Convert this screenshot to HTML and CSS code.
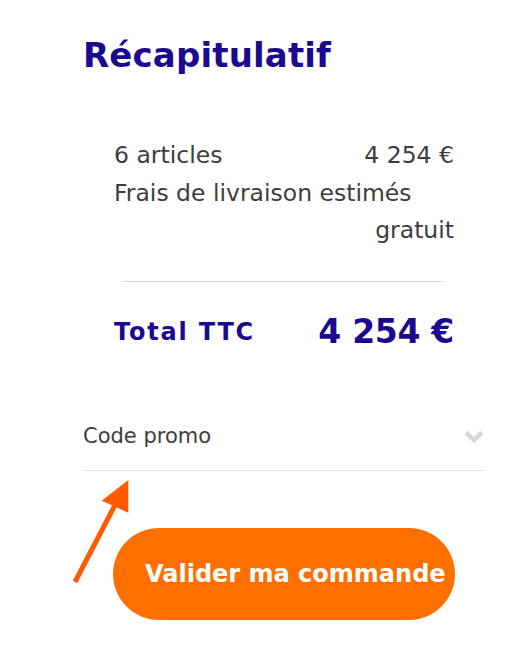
FILE: index.html
```html
<!DOCTYPE html>
<html lang="fr">
<head>
<meta charset="utf-8">
<link rel="stylesheet" href="styles.css">
</head>
<body>
<div class="summary">
  <h1 class="title">Récapitulatif</h1>
  <div class="details">
    <div class="row"><span>6 articles</span><span>4 254 €</span></div>
    <div class="row row-stack"><span>Frais de livraison estimés</span><span class="right">gratuit</span></div>
    <hr class="divider">
    <div class="row total"><span class="total-label">Total TTC</span><span class="total-value">4 254 €</span></div>
  </div>
  <div class="promo">
    <span>Code promo</span>
    <svg class="chevron" width="20" height="13" viewBox="0 0 20 13"><path d="M2 2.5 L10 10 L18 2.5" fill="none" stroke="#d6d6d6" stroke-width="4.5"/></svg>
  </div>
  <div class="actions">
    <svg class="arrow" width="70" height="115" viewBox="0 0 70 115"><line x1="7" y1="107" x2="47" y2="30" stroke="#ff5a00" stroke-width="5"/><polygon points="60.3,5 60.3,37.7 33.7,25.7" fill="#ff5a00"/></svg>
    <button class="btn">Valider ma commande</button>
  </div>
</div>
</body>
</html>
```

FILE: styles.css
```css
* { box-sizing: border-box; }
body {
  margin: 0;
  background: #fff;
  font-family: "DejaVu Sans", "Open Sans", sans-serif;
  color: #3d3d3d;
}
.summary {
  margin-left: 83px;
  width: 402px;
  padding-top: 30px;
}
.title {
  margin: 0;
  font-size: 34px;
  line-height: 50px;
  font-weight: 700;
  color: #1b0a8f;
  letter-spacing: 0.15px;
}
.details {
  margin-top: 57px;
  padding-left: 31px;
  width: 371px;
}
.row {
  display: flex;
  justify-content: space-between;
  font-size: 23.5px;
  line-height: 37.5px;
}
.row-stack { flex-direction: column; }
.right { align-self: flex-end; }
.divider {
  border: 0;
  border-top: 1px solid #dedede;
  margin: 31px 9px 0 8px;
}
.total {
  margin-top: 25.5px;
  align-items: center;
  line-height: 50px;
  color: #1b0a8f;
  font-weight: 700;
}
.total-label { font-size: 24px; letter-spacing: 1.8px; }
.total-value { font-size: 33px; letter-spacing: -0.3px; }
.promo {
  margin-top: 64px;
  display: flex;
  justify-content: space-between;
  align-items: center;
  line-height: 30px;
  font-size: 21px;
  padding-bottom: 18.6px;
  border-bottom: 1px solid #e4e4e4;
}
.chevron { display: block; margin-right: 1px; }
.actions {
  position: relative;
  margin-top: 57px;
  padding-left: 30px;
}
.arrow {
  position: absolute;
  left: -15px;
  top: -53px;
}
.btn {
  display: block;
  width: 342px;
  height: 92px;
  border: 0;
  border-radius: 46px;
  background: #ff6f00;
  color: #fff;
  font-family: inherit;
  font-size: 24px;
  font-weight: 700;
  text-align: left;
  padding: 0 0 0 32px;
  white-space: nowrap;
}
```
